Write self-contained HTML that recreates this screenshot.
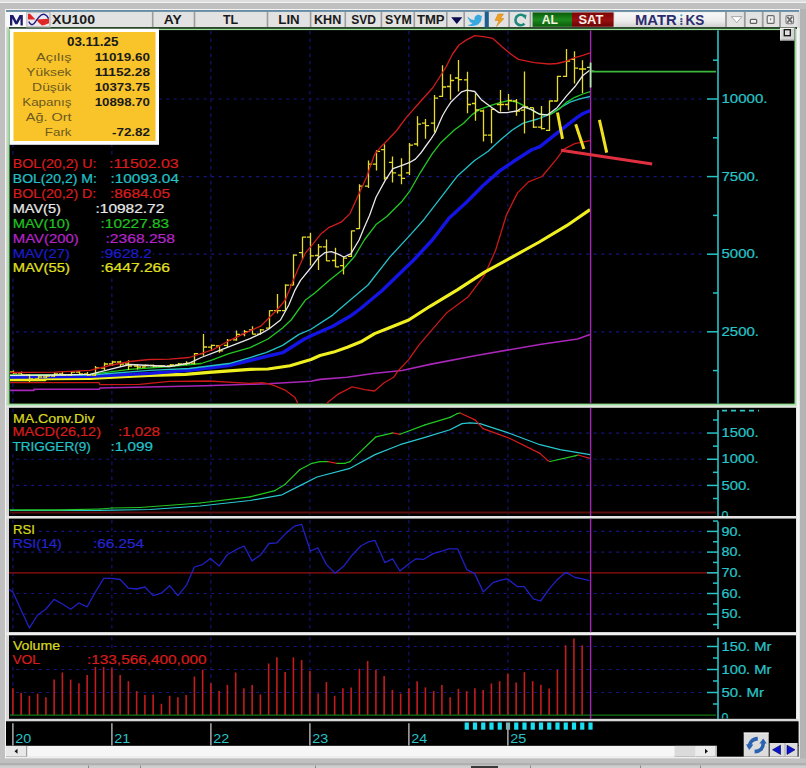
<!DOCTYPE html><html><head><meta charset="utf-8"><style>html,body{margin:0;padding:0;background:#c0c0c0;overflow:hidden}svg{display:block}</style></head><body><svg width="806" height="768" viewBox="0 0 806 768"><rect x="0" y="0" width="806" height="768" fill="#c0c0c0" /><rect x="0" y="0" width="806" height="1.5" fill="#dcdcdc" /><rect x="0" y="1.5" width="806" height="1.5" fill="#f2f2f2" /><rect x="5" y="9" width="795" height="750" fill="#d8d8d8" /><rect x="5" y="9" width="795" height="1" fill="#f4f4f4" /><rect x="5" y="9" width="1" height="750" fill="#f4f4f4" /><rect x="796.5" y="28" width="3" height="731" fill="#f4f4f4" /><rect x="800" y="9" width="6" height="759" fill="#b4b4b4" /><rect x="6" y="10.2" width="793" height="1.5" fill="#4a7898" /><rect x="6" y="12" width="791" height="15" fill="#e2e2e2" /><rect x="9" y="27.2" width="788" height="1.7" fill="#062406" /><rect x="6" y="12" width="20" height="15" fill="#f8f8f8" /><path d="M10 25.4 L10 15 L13.2 15 L16.4 21 L19.6 15 L22.8 15 L22.8 25.4 L20.5 25.4 L20.5 18.6 L17.5 24.2 L15.3 24.2 L12.3 18.6 L12.3 25.4 Z" fill="#1c1c6c"/><rect x="26.2" y="12" width="24.6" height="15.5" fill="#c4c4c4" /><rect x="27.5" y="13" width="21.5" height="13" fill="#ece8ec" /><path d="M28 13.8 L30 13.8 L35.5 19.5 L28 19.5 Z" fill="#e02828"/><path d="M36.5 19.6 L49 18.8 L49 23.2 L44.5 25 L42 25.4 L38.5 22.5 Z" fill="#e02828"/><path d="M28.8 21.5 C30 24.5 32 25.2 33.8 23.8 C35.5 22.5 37 19 39 17 C41 14.8 43 13.8 45 14.6 C46.5 15.3 47.8 17 48.6 18.6" fill="none" stroke="#1a1a88" stroke-width="1.4"/><rect x="151.89999999999998" y="12" width="1.6" height="15" fill="#9c9c9c" /><rect x="193.7" y="12" width="1.6" height="15" fill="#9c9c9c" /><rect x="266.7" y="12" width="1.6" height="15" fill="#9c9c9c" /><rect x="309.8" y="12" width="1.6" height="15" fill="#9c9c9c" /><rect x="344.5" y="12" width="1.6" height="15" fill="#9c9c9c" /><rect x="380.59999999999997" y="12" width="1.6" height="15" fill="#9c9c9c" /><rect x="413.5" y="12" width="1.6" height="15" fill="#9c9c9c" /><rect x="446.0" y="12" width="1.6" height="15" fill="#9c9c9c" /><rect x="463.4" y="12" width="1.6" height="15" fill="#9c9c9c" /><text x="52" y="24" font-family="Liberation Sans" font-size="12" fill="#1a1a1a" font-weight="bold" text-anchor="start" textLength="43" lengthAdjust="spacingAndGlyphs" >XU100</text><text x="163.7" y="24" font-family="Liberation Sans" font-size="12" fill="#1a1a1a" font-weight="bold" text-anchor="start" textLength="18" lengthAdjust="spacingAndGlyphs" >AY</text><text x="223" y="24" font-family="Liberation Sans" font-size="12" fill="#1a1a1a" font-weight="bold" text-anchor="start" textLength="15.2" lengthAdjust="spacingAndGlyphs" >TL</text><text x="278.3" y="24" font-family="Liberation Sans" font-size="12" fill="#1a1a1a" font-weight="bold" text-anchor="start" textLength="21.4" lengthAdjust="spacingAndGlyphs" >LIN</text><text x="314" y="24" font-family="Liberation Sans" font-size="12" fill="#1a1a1a" font-weight="bold" text-anchor="start" textLength="27.3" lengthAdjust="spacingAndGlyphs" >KHN</text><text x="351.3" y="24" font-family="Liberation Sans" font-size="12" fill="#1a1a1a" font-weight="bold" text-anchor="start" textLength="24.7" lengthAdjust="spacingAndGlyphs" >SVD</text><text x="385" y="24" font-family="Liberation Sans" font-size="12" fill="#1a1a1a" font-weight="bold" text-anchor="start" textLength="26.8" lengthAdjust="spacingAndGlyphs" >SYM</text><text x="416.9" y="24" font-family="Liberation Sans" font-size="12" fill="#1a1a1a" font-weight="bold" text-anchor="start" textLength="27.7" lengthAdjust="spacingAndGlyphs" >TMP</text><path d="M451.2 17.3 L462.3 17.3 L456.8 24 Z" fill="#0a0a50"/><path d="M467.5 16.5 C469.5 19 472 20 474.5 20 C474 17 476 14.5 479 14.8 C480 15 481 16 481 16 L482.5 15.5 L481.6 17 C482 22 478 26.5 471 26 C469.5 26 468.5 25.5 467.5 25 C470 25 471.5 24 472.5 23 C470 22.5 469 21 469 20.5 L470.5 20.5 C468.5 19.5 467.5 18.5 467.5 16.5 Z" fill="#3aa8e0"/><rect x="484.7" y="11.5" width="4.1" height="16" fill="#1e5e8e" /><path d="M498 14 L503.5 14 L500.5 18.5 L504 18.5 L496.5 26.5 L499 20.5 L495 20.5 Z" fill="#f0a020" stroke="#c07000" stroke-width="0.4"/><rect x="508.3" y="12" width="1.6" height="15" fill="#9c9c9c" /><path d="M524.5 16.5 A5.2 5.2 0 1 0 524.5 23.5" fill="none" stroke="#1e8a7a" stroke-width="2.6"/><path d="M521.5 14.5 L526.5 14.8 L525.8 19.5 Z" fill="#1e8a7a"/><rect x="529.6" y="12" width="1.6" height="15" fill="#9c9c9c" /><defs><linearGradient id="gAL" x1="0" y1="0" x2="0" y2="1"><stop offset="0" stop-color="#0a5a0a"/><stop offset="0.5" stop-color="#1e8a1e"/><stop offset="1" stop-color="#0a5a0a"/></linearGradient><linearGradient id="gSAT" x1="0" y1="0" x2="0" y2="1"><stop offset="0" stop-color="#7a0606"/><stop offset="0.5" stop-color="#9a1010"/><stop offset="1" stop-color="#6a0404"/></linearGradient><linearGradient id="gMK" x1="0" y1="0" x2="0" y2="1"><stop offset="0" stop-color="#f8f8f8"/><stop offset="0.6" stop-color="#ececec"/><stop offset="1" stop-color="#d0d0d0"/></linearGradient></defs><rect x="532.5" y="12.4" width="39.5" height="14.4" fill="url(#gAL)" /><text x="541.8" y="24.2" font-family="Liberation Sans" font-size="12.5" fill="#f4f4e0" font-weight="bold" text-anchor="start" textLength="16.2" lengthAdjust="spacingAndGlyphs" >AL</text><rect x="572" y="12.4" width="41.6" height="14.4" fill="url(#gSAT)" /><text x="578.5" y="24.2" font-family="Liberation Sans" font-size="12.5" fill="#f8f0e8" font-weight="bold" text-anchor="start" textLength="24.8" lengthAdjust="spacingAndGlyphs" >SAT</text><rect x="614.8" y="12.4" width="111" height="14.4" fill="url(#gMK)" /><text x="635" y="24.9" font-family="Liberation Sans" font-size="14.6" fill="#2b2d6e" font-weight="bold" text-anchor="start" textLength="41.6" lengthAdjust="spacingAndGlyphs" >MATR</text><text x="685.6" y="24.9" font-family="Liberation Sans" font-size="14.6" fill="#2b2d6e" font-weight="bold" text-anchor="start" textLength="18.8" lengthAdjust="spacingAndGlyphs" >KS</text><circle cx="681.4" cy="15.3" r="1.1" fill="#40a8c8"/><rect x="680.4" y="18.2" width="2" height="1.6" fill="#2b2d6e" /><rect x="680.4" y="20.6" width="2" height="1.6" fill="#2b2d6e" /><rect x="680.4" y="23.2" width="2" height="1.6" fill="#2b2d6e" /><rect x="726" y="12" width="71.5" height="15" fill="#e2e2e2" /><rect x="725.1" y="12" width="1.8" height="15" fill="#9a9a9a" /><rect x="743.9" y="12" width="1.8" height="15" fill="#9a9a9a" /><rect x="761.8000000000001" y="12" width="1.8" height="15" fill="#9a9a9a" /><rect x="779.1" y="12" width="1.8" height="15" fill="#9a9a9a" /><path d="M731.4 16.6 L741.9 16.6 L736.7 22.7 Z" fill="#ffffff" stroke="#a8a8a8" stroke-width="1"/><rect x="750.3" y="19.4" width="6.4" height="4" fill="#f0f0f0" rx="1" stroke="#606060" stroke-width="1.2"/><rect x="767.2" y="15.6" width="6.9" height="7.8" fill="#f0f0f0" rx="1" stroke="#6a6a6a" stroke-width="1.2"/><rect x="770.1" y="18.2" width="1.1" height="2.2" fill="#808080" /><rect x="786" y="15.6" width="7.5" height="8.2" fill="#f4f4f4" rx="1.5" stroke="#7a7a7a" stroke-width="1.1"/><path d="M787.3 16.8 L792.2 22.6 M792.2 16.8 L787.3 22.6" stroke="#6a6a6a" stroke-width="1.8"/><rect x="7.5" y="28.8" width="788.8" height="376.7" fill="#98e098" /><rect x="9.5" y="30.1" width="785" height="373.5" fill="#000000" /><rect x="6.5" y="405.5" width="790" height="2.3" fill="#dce8dc" /><rect x="9" y="407.8" width="787" height="108.2" fill="#000000" /><rect x="6.5" y="516" width="790" height="2.6" fill="#e4e4e4" /><rect x="9" y="518.6" width="787" height="113.7" fill="#000000" /><rect x="6.5" y="632.3" width="790" height="3" fill="#f0f0f0" /><rect x="9" y="635.3" width="787" height="83.6" fill="#000000" /><rect x="6.5" y="718.9" width="792" height="2.4" fill="#d8d8d8" /><rect x="6" y="721.3" width="792.6" height="24.6" fill="#000000" /><line x1="16.2" y1="99.0" x2="702" y2="99.0" stroke="#16167e" stroke-width="1.2" stroke-dasharray="3 4.5"/><line x1="16.2" y1="176.6" x2="702" y2="176.6" stroke="#16167e" stroke-width="1.2" stroke-dasharray="3 4.5"/><line x1="16.2" y1="254.2" x2="702" y2="254.2" stroke="#16167e" stroke-width="1.2" stroke-dasharray="3 4.5"/><line x1="16.2" y1="331.8" x2="702" y2="331.8" stroke="#16167e" stroke-width="1.2" stroke-dasharray="3 4.5"/><line x1="12.9" y1="31" x2="12.9" y2="403" stroke="#16167e" stroke-width="1.1" stroke-dasharray="3.5 4"/><line x1="111.9" y1="31" x2="111.9" y2="403" stroke="#16167e" stroke-width="1.1" stroke-dasharray="3.5 4"/><line x1="210.9" y1="31" x2="210.9" y2="403" stroke="#16167e" stroke-width="1.1" stroke-dasharray="3.5 4"/><line x1="309.9" y1="31" x2="309.9" y2="403" stroke="#16167e" stroke-width="1.1" stroke-dasharray="3.5 4"/><line x1="408.9" y1="31" x2="408.9" y2="403" stroke="#16167e" stroke-width="1.1" stroke-dasharray="3.5 4"/><line x1="507.9" y1="31" x2="507.9" y2="403" stroke="#16167e" stroke-width="1.1" stroke-dasharray="3.5 4"/><line x1="718" y1="30.3" x2="718" y2="403.6" stroke="#28c4c8" stroke-width="1.6" /><line x1="713" y1="60.19999999999999" x2="718" y2="60.19999999999999" stroke="#28c4c8" stroke-width="1.5" /><line x1="707" y1="99.0" x2="718" y2="99.0" stroke="#28c4c8" stroke-width="1.5" /><text x="721.5" y="103.2" font-family="Liberation Sans" font-size="12.4" fill="#28c4c8" stroke="#28c4c8" stroke-width="0.22" text-anchor="start" textLength="46" lengthAdjust="spacingAndGlyphs" >10000.</text><line x1="713" y1="137.8" x2="718" y2="137.8" stroke="#28c4c8" stroke-width="1.5" /><line x1="707" y1="176.6" x2="718" y2="176.6" stroke="#28c4c8" stroke-width="1.5" /><text x="721.5" y="180.79999999999998" font-family="Liberation Sans" font-size="12.4" fill="#28c4c8" stroke="#28c4c8" stroke-width="0.22" text-anchor="start" textLength="37.5" lengthAdjust="spacingAndGlyphs" >7500.</text><line x1="713" y1="215.4" x2="718" y2="215.4" stroke="#28c4c8" stroke-width="1.5" /><line x1="707" y1="254.2" x2="718" y2="254.2" stroke="#28c4c8" stroke-width="1.5" /><text x="721.5" y="258.4" font-family="Liberation Sans" font-size="12.4" fill="#28c4c8" stroke="#28c4c8" stroke-width="0.22" text-anchor="start" textLength="37.5" lengthAdjust="spacingAndGlyphs" >5000.</text><line x1="713" y1="293.0" x2="718" y2="293.0" stroke="#28c4c8" stroke-width="1.5" /><line x1="707" y1="331.8" x2="718" y2="331.8" stroke="#28c4c8" stroke-width="1.5" /><text x="721.5" y="336.0" font-family="Liberation Sans" font-size="12.4" fill="#28c4c8" stroke="#28c4c8" stroke-width="0.22" text-anchor="start" textLength="37.5" lengthAdjust="spacingAndGlyphs" >2500.</text><line x1="713" y1="370.6" x2="718" y2="370.6" stroke="#28c4c8" stroke-width="1.5" /><rect x="9.5" y="28.8" width="149.5" height="116" fill="#ffffff" /><rect x="13.5" y="32" width="142" height="109" fill="#f8c42a" /><text x="92.7" y="46.2" font-family="Liberation Sans" font-size="12" fill="#1a1a1a" font-weight="bold" text-anchor="middle" textLength="51.5" lengthAdjust="spacingAndGlyphs" >03.11.25</text><text x="71.5" y="60.6" font-family="Liberation Sans" font-size="11" fill="#6e5a20" text-anchor="end" textLength="35.5" lengthAdjust="spacingAndGlyphs" >Açılış</text><text x="150" y="60.6" font-family="Liberation Sans" font-size="11.7" fill="#1a1a1a" font-weight="bold" text-anchor="end" textLength="55.3" lengthAdjust="spacingAndGlyphs" >11019.60</text><text x="71.5" y="75.68" font-family="Liberation Sans" font-size="11" fill="#6e5a20" text-anchor="end" textLength="45.2" lengthAdjust="spacingAndGlyphs" >Yüksek</text><text x="150" y="75.68" font-family="Liberation Sans" font-size="11.7" fill="#1a1a1a" font-weight="bold" text-anchor="end" textLength="55.3" lengthAdjust="spacingAndGlyphs" >11152.28</text><text x="71.5" y="90.76" font-family="Liberation Sans" font-size="11" fill="#6e5a20" text-anchor="end" textLength="39.4" lengthAdjust="spacingAndGlyphs" >Düşük</text><text x="150" y="90.76" font-family="Liberation Sans" font-size="11.7" fill="#1a1a1a" font-weight="bold" text-anchor="end" textLength="55.3" lengthAdjust="spacingAndGlyphs" >10373.75</text><text x="71.5" y="105.84" font-family="Liberation Sans" font-size="11" fill="#6e5a20" text-anchor="end" textLength="49.3" lengthAdjust="spacingAndGlyphs" >Kapanış</text><text x="150" y="105.84" font-family="Liberation Sans" font-size="11.7" fill="#1a1a1a" font-weight="bold" text-anchor="end" textLength="55.3" lengthAdjust="spacingAndGlyphs" >10898.70</text><text x="71.5" y="120.92" font-family="Liberation Sans" font-size="11" fill="#6e5a20" text-anchor="end" textLength="45.7" lengthAdjust="spacingAndGlyphs" >Ağ. Ort</text><text x="71.5" y="136.0" font-family="Liberation Sans" font-size="11" fill="#6e5a20" text-anchor="end" textLength="26.700000000000003" lengthAdjust="spacingAndGlyphs" >Fark</text><text x="150" y="136.0" font-family="Liberation Sans" font-size="11.7" fill="#1a1a1a" font-weight="bold" text-anchor="end" textLength="38" lengthAdjust="spacingAndGlyphs" >-72.82</text><rect x="10" y="157.1" width="169.7" height="14.5" fill="#000" /><text x="12.8" y="168.1" font-family="Liberation Sans" font-size="12.4" fill="#d81c1c" stroke="#d81c1c" stroke-width="0.22" text-anchor="start" textLength="83.7" lengthAdjust="spacingAndGlyphs" >BOL(20,2) U:</text><text x="109" y="168.1" font-family="Liberation Sans" font-size="12.4" fill="#d81c1c" stroke="#d81c1c" stroke-width="0.22" text-anchor="start" textLength="69.7" lengthAdjust="spacingAndGlyphs" >:11502.03</text><rect x="10" y="172.0" width="170.0" height="14.5" fill="#000" /><text x="12.8" y="183.0" font-family="Liberation Sans" font-size="12.4" fill="#22c0c8" stroke="#22c0c8" stroke-width="0.22" text-anchor="start" textLength="84" lengthAdjust="spacingAndGlyphs" >BOL(20,2) M:</text><text x="110.4" y="183.0" font-family="Liberation Sans" font-size="12.4" fill="#22c0c8" stroke="#22c0c8" stroke-width="0.22" text-anchor="start" textLength="68.6" lengthAdjust="spacingAndGlyphs" >:10093.04</text><rect x="10" y="186.9" width="161" height="14.5" fill="#000" /><text x="12.8" y="197.9" font-family="Liberation Sans" font-size="12.4" fill="#d81c1c" stroke="#d81c1c" stroke-width="0.22" text-anchor="start" textLength="83.5" lengthAdjust="spacingAndGlyphs" >BOL(20,2) D:</text><text x="110" y="197.9" font-family="Liberation Sans" font-size="12.4" fill="#d81c1c" stroke="#d81c1c" stroke-width="0.22" text-anchor="start" textLength="60" lengthAdjust="spacingAndGlyphs" >:8684.05</text><rect x="10" y="201.8" width="155.3" height="14.5" fill="#000" /><text x="12.8" y="212.8" font-family="Liberation Sans" font-size="12.4" fill="#e8e8e8" stroke="#e8e8e8" stroke-width="0.22" text-anchor="start" textLength="48" lengthAdjust="spacingAndGlyphs" >MAV(5)</text><text x="95.5" y="212.8" font-family="Liberation Sans" font-size="12.4" fill="#e8e8e8" stroke="#e8e8e8" stroke-width="0.22" text-anchor="start" textLength="68.8" lengthAdjust="spacingAndGlyphs" >:10982.72</text><rect x="10" y="216.7" width="160.2" height="14.5" fill="#000" /><text x="12.8" y="227.7" font-family="Liberation Sans" font-size="12.4" fill="#20c020" stroke="#20c020" stroke-width="0.22" text-anchor="start" textLength="57" lengthAdjust="spacingAndGlyphs" >MAV(10)</text><text x="100.5" y="227.7" font-family="Liberation Sans" font-size="12.4" fill="#20c020" stroke="#20c020" stroke-width="0.22" text-anchor="start" textLength="68.7" lengthAdjust="spacingAndGlyphs" >:10227.83</text><rect x="10" y="231.6" width="166.0" height="14.5" fill="#000" /><text x="12.8" y="242.6" font-family="Liberation Sans" font-size="12.4" fill="#b424c8" stroke="#b424c8" stroke-width="0.22" text-anchor="start" textLength="66" lengthAdjust="spacingAndGlyphs" >MAV(200)</text><text x="105.5" y="242.6" font-family="Liberation Sans" font-size="12.4" fill="#b424c8" stroke="#b424c8" stroke-width="0.22" text-anchor="start" textLength="69.5" lengthAdjust="spacingAndGlyphs" >:2368.258</text><rect x="10" y="246.5" width="142.9" height="14.5" fill="#000" /><text x="12.8" y="257.5" font-family="Liberation Sans" font-size="12.4" fill="#1c1cc8" stroke="#1c1cc8" stroke-width="0.22" text-anchor="start" textLength="57" lengthAdjust="spacingAndGlyphs" >MAV(27)</text><text x="100.5" y="257.5" font-family="Liberation Sans" font-size="12.4" fill="#1c1cc8" stroke="#1c1cc8" stroke-width="0.22" text-anchor="start" textLength="51.4" lengthAdjust="spacingAndGlyphs" >:9628.2</text><rect x="10" y="261.4" width="161.0" height="14.5" fill="#000" /><text x="12.8" y="272.4" font-family="Liberation Sans" font-size="12.4" fill="#e0e020" stroke="#e0e020" stroke-width="0.22" text-anchor="start" textLength="57" lengthAdjust="spacingAndGlyphs" >MAV(55)</text><text x="100.5" y="272.4" font-family="Liberation Sans" font-size="12.4" fill="#e0e020" stroke="#e0e020" stroke-width="0.22" text-anchor="start" textLength="69.5" lengthAdjust="spacingAndGlyphs" >:6447.266</text><svg x="9.5" y="30.3" width="785" height="373.3" viewBox="9.5 30.3 785 373.3" overflow="hidden"><polyline points="10.0,390.4 34.0,390.4 34.0,389.3 99.0,389.3 100.0,388.0 159.5,386.7 205.1,385.7 250.0,384.3 268.0,383.7 311.0,381.2 320.0,379.4 347.0,377.3 375.0,373.2 402.0,370.5 430.0,364.4 477.6,355.2 541.3,344.3 577.6,339.0 590.0,334.5" fill="none" stroke="#a826b8" stroke-width="1.6" stroke-linejoin="round" /><polyline points="10.0,382.7 99.0,382.7 100.0,384.6 139.6,384.3 169.4,381.3 209.0,381.0 250.0,383.3 262.0,382.7 268.0,383.7 275.0,385.9 285.0,390.1 295.0,397.5 299.0,406.0" fill="none" stroke="#c81818" stroke-width="1.3" stroke-linejoin="round" /><polyline points="325.0,406.0 328.2,401.9 337.7,394.4 352.1,386.9 365.0,389.6 374.6,391.0 384.1,382.8 393.7,377.3 397.8,371.2 408.7,359.6 418.3,345.9 430.0,332.2 446.4,313.1 468.3,296.7 484.7,274.8 495.6,250.3 506.5,214.7 517.5,192.9 528.4,181.9 542.0,176.5 555.7,160.1 563.9,149.1 574.8,143.7 590.0,140.6" fill="none" stroke="#c81818" stroke-width="1.3" stroke-linejoin="round" /><polyline points="10.0,379.8 45.0,379.8 45.0,378.7 90.0,378.4 127.7,376.4 149.5,375.4 185.2,374.4 209.0,372.4 250.0,369.4 268.0,369.0 290.0,365.8 311.0,359.5 320.0,355.5 333.6,352.1 347.3,347.3 360.9,341.8 374.6,333.6 388.2,328.2 408.7,320.0 430.0,306.3 457.3,289.9 484.7,272.1 512.0,257.1 539.3,242.0 566.6,225.7 590.0,209.6" fill="none" stroke="#f0f020" stroke-width="3.1" stroke-linejoin="round" /><polyline points="10.0,377.0 90.0,376.4 149.5,373.4 189.2,370.4 229.0,365.5 250.0,360.5 266.0,356.5 282.6,352.7 304.5,339.0 310.6,336.0 332.7,326.2 350.0,316.3 360.0,309.0 381.9,290.7 413.7,260.0 432.3,240.0 449.2,218.0 466.2,202.5 483.1,185.5 500.0,170.6 516.5,159.5 531.3,150.0 540.0,146.7 558.2,132.1 576.5,117.8 583.0,113.5 590.2,110.6" fill="none" stroke="#1414e4" stroke-width="3.4" stroke-linejoin="round" /><polyline points="10.0,375.5 90.0,375.0 149.5,370.4 189.2,368.5 229.0,363.5 250.0,357.5 266.0,352.7 282.6,345.4 299.0,334.4 310.6,329.5 332.7,315.1 350.0,300.3 368.0,285.0 390.0,256.9 410.3,234.9 423.8,219.7 440.8,197.7 457.7,175.7 474.6,160.5 488.2,151.2 500.0,140.2 511.9,130.3 523.2,123.1 537.7,119.0 550.6,114.2 560.3,107.7 570.0,102.1 579.7,98.9 590.2,96.5" fill="none" stroke="#22c0c8" stroke-width="1.3" stroke-linejoin="round" /><polyline points="10.0,375.0 90.0,374.4 129.7,369.4 169.4,366.5 201.2,363.5 213.0,359.6 229.0,353.6 250.0,347.6 268.0,339.0 282.6,328.0 291.1,320.0 305.2,300.3 314.5,293.3 330.0,279.8 343.0,269.5 354.7,256.3 364.3,240.0 376.0,224.6 386.5,216.8 402.1,201.2 410.0,190.8 420.5,172.3 432.3,153.7 440.8,142.7 454.3,130.0 463.9,123.0 472.1,114.6 479.7,109.4 491.0,105.3 499.0,102.9 508.7,100.5 516.8,102.1 524.8,106.1 534.5,111.8 542.6,115.0 550.6,114.2 558.7,109.4 566.8,102.1 574.8,97.3 582.9,94.0 590.2,91.6" fill="none" stroke="#22c822" stroke-width="1.3" stroke-linejoin="round" /><path d="M13.5 370.5 L13.5 374 M9.9 372 L13.5 372 M13.5 373 L17.1 373" stroke="#e6dc28" stroke-width="1.3" fill="none"/><path d="M21.5 371.5 L21.5 376 M17.9 373 L21.5 373 M21.5 375 L25.1 375" stroke="#e6dc28" stroke-width="1.3" fill="none"/><path d="M29.5 374 L29.5 382 M25.9 375 L29.5 375 M29.5 379 L33.1 379" stroke="#e6dc28" stroke-width="1.3" fill="none"/><path d="M38.5 375 L38.5 381 M34.9 379 L38.5 379 M38.5 377 L42.1 377" stroke="#e6dc28" stroke-width="1.3" fill="none"/><path d="M46.5 375 L46.5 378 M42.9 377 L46.5 377 M46.5 376 L50.1 376" stroke="#e6dc28" stroke-width="1.3" fill="none"/><path d="M54.5 372.5 L54.5 377 M50.9 376 L54.5 376 M54.5 374 L58.1 374" stroke="#e6dc28" stroke-width="1.3" fill="none"/><path d="M62.5 372 L62.5 376 M58.9 374 L62.5 374 M62.5 375 L66.1 375" stroke="#e6dc28" stroke-width="1.3" fill="none"/><path d="M71.5 371 L71.5 376 M67.9 375 L71.5 375 M71.5 372 L75.1 372" stroke="#e6dc28" stroke-width="1.3" fill="none"/><path d="M79.5 371 L79.5 375 M75.9 372 L79.5 372 M79.5 374 L83.1 374" stroke="#e6dc28" stroke-width="1.3" fill="none"/><path d="M87.5 372 L87.5 376 M83.9 374 L87.5 374 M87.5 375 L91.1 375" stroke="#e6dc28" stroke-width="1.3" fill="none"/><path d="M95.5 366 L95.5 376 M91.9 375 L95.5 375 M95.5 368 L99.1 368" stroke="#e6dc28" stroke-width="1.3" fill="none"/><path d="M104.5 362.5 L104.5 370 M100.9 368 L104.5 368 M104.5 364 L108.1 364" stroke="#e6dc28" stroke-width="1.3" fill="none"/><path d="M112.5 360.8 L112.5 366 M108.9 364 L112.5 364 M112.5 362 L116.1 362" stroke="#e6dc28" stroke-width="1.3" fill="none"/><path d="M120.5 360.8 L120.5 366 M116.9 362 L120.5 362 M120.5 364 L124.1 364" stroke="#e6dc28" stroke-width="1.3" fill="none"/><path d="M128.5 360.2 L128.5 370 M124.9 364 L128.5 364 M128.5 366 L132.1 366" stroke="#e6dc28" stroke-width="1.3" fill="none"/><path d="M137.5 364.6 L137.5 369.4 M133.9 366 L137.5 366 M137.5 367 L141.1 367" stroke="#e6dc28" stroke-width="1.3" fill="none"/><path d="M145.5 364.6 L145.5 366.5 M141.9 367 L145.5 367 M145.5 365.5 L149.1 365.5" stroke="#e6dc28" stroke-width="1.3" fill="none"/><path d="M153.5 364.6 L153.5 367.3 M149.9 365.5 L153.5 365.5 M153.5 366 L157.1 366" stroke="#e6dc28" stroke-width="1.3" fill="none"/><path d="M161.5 365 L161.5 367 M157.9 366 L161.5 366 M161.5 366 L165.1 366" stroke="#e6dc28" stroke-width="1.3" fill="none"/><path d="M170.5 364 L170.5 366.5 M166.9 366 L170.5 366 M170.5 365 L174.1 365" stroke="#e6dc28" stroke-width="1.3" fill="none"/><path d="M178.5 363 L178.5 366 M174.9 365 L178.5 365 M178.5 364 L182.1 364" stroke="#e6dc28" stroke-width="1.3" fill="none"/><path d="M186.5 361.2 L186.5 365.3 M182.9 364 L186.5 364 M186.5 363.2 L190.1 363.2" stroke="#e6dc28" stroke-width="1.3" fill="none"/><path d="M194.5 353 L194.5 364.6 M190.9 363.2 L194.5 363.2 M194.5 353.7 L198.1 353.7" stroke="#e6dc28" stroke-width="1.3" fill="none"/><path d="M203.5 334 L203.5 355.7 M199.9 353.7 L203.5 353.7 M203.5 347 L207.1 347" stroke="#e6dc28" stroke-width="1.3" fill="none"/><path d="M211.5 344.5 L211.5 350.9 M207.9 347.2 L211.5 347.2 M211.5 345.4 L215.1 345.4" stroke="#e6dc28" stroke-width="1.3" fill="none"/><path d="M219.5 345.8 L219.5 352.7 M215.9 346 L219.5 346 M219.5 350.9 L223.1 350.9" stroke="#e6dc28" stroke-width="1.3" fill="none"/><path d="M227.5 339 L227.5 347.2 M223.9 345.4 L227.5 345.4 M227.5 340.3 L231.1 340.3" stroke="#e6dc28" stroke-width="1.3" fill="none"/><path d="M236.5 330.4 L236.5 340.8 M232.9 339.9 L236.5 339.9 M236.5 334.4 L240.1 334.4" stroke="#e6dc28" stroke-width="1.3" fill="none"/><path d="M244.5 329.9 L244.5 336.3 M240.9 334.4 L244.5 334.4 M244.5 331.7 L248.1 331.7" stroke="#e6dc28" stroke-width="1.3" fill="none"/><path d="M252.5 326.2 L252.5 334.4 M248.9 329.9 L252.5 329.9 M252.5 334.1 L256.1 334.1" stroke="#e6dc28" stroke-width="1.3" fill="none"/><path d="M260.5 329 L260.5 334.4 M256.9 334.1 L260.5 334.1 M260.5 329.9 L264.1 329.9" stroke="#e6dc28" stroke-width="1.3" fill="none"/><path d="M269.5 310.4 L269.5 329 M265.9 328.1 L269.5 328.1 M269.5 310.7 L273.1 310.7" stroke="#e6dc28" stroke-width="1.3" fill="none"/><path d="M277.5 294 L277.5 313.5 M273.9 310.7 L277.5 310.7 M277.5 310.7 L281.1 310.7" stroke="#e6dc28" stroke-width="1.3" fill="none"/><path d="M285.5 284.3 L285.5 310.7 M281.9 310.7 L285.5 310.7 M285.5 285.2 L289.1 285.2" stroke="#e6dc28" stroke-width="1.3" fill="none"/><path d="M293.5 254.2 L293.5 285.2 M289.9 285.2 L293.5 285.2 M293.5 255.1 L297.1 255.1" stroke="#e6dc28" stroke-width="1.3" fill="none"/><path d="M302.5 236.7 L302.5 259.4 M298.9 252.7 L302.5 252.7 M302.5 237.1 L306.1 237.1" stroke="#e6dc28" stroke-width="1.3" fill="none"/><path d="M310.5 232.8 L310.5 265.6 M306.9 237.1 L310.5 237.1 M310.5 255.9 L314.1 255.9" stroke="#e6dc28" stroke-width="1.3" fill="none"/><path d="M318.5 244.1 L318.5 269.9 M314.9 255.5 L318.5 255.5 M318.5 246.9 L322.1 246.9" stroke="#e6dc28" stroke-width="1.3" fill="none"/><path d="M326.5 239.5 L326.5 260.9 M322.9 246.9 L326.5 246.9 M326.5 260.9 L330.1 260.9" stroke="#e6dc28" stroke-width="1.3" fill="none"/><path d="M335.5 247.7 L335.5 267.2 M331.9 260.5 L335.5 260.5 M335.5 266.8 L339.1 266.8" stroke="#e6dc28" stroke-width="1.3" fill="none"/><path d="M343.5 256.6 L343.5 274.6 M339.9 265.6 L343.5 265.6 M343.5 258.2 L347.1 258.2" stroke="#e6dc28" stroke-width="1.3" fill="none"/><path d="M351.5 230.5 L351.5 257 M347.9 256.3 L351.5 256.3 M351.5 230.9 L355.1 230.9" stroke="#e6dc28" stroke-width="1.3" fill="none"/><path d="M359.5 184.3 L359.5 229 M355.9 228.6 L359.5 228.6 M359.5 186.1 L363.1 186.1" stroke="#e6dc28" stroke-width="1.3" fill="none"/><path d="M368.5 160.6 L368.5 187.9 M364.9 186.1 L368.5 186.1 M368.5 164.2 L372.1 164.2" stroke="#e6dc28" stroke-width="1.3" fill="none"/><path d="M376.5 150.2 L376.5 170.6 M372.9 164.2 L376.5 164.2 M376.5 151.4 L380.1 151.4" stroke="#e6dc28" stroke-width="1.3" fill="none"/><path d="M384.5 144.2 L384.5 179.7 M380.9 149.6 L384.5 149.6 M384.5 177.9 L388.1 177.9" stroke="#e6dc28" stroke-width="1.3" fill="none"/><path d="M392.5 156.4 L392.5 182.5 M388.9 162.4 L392.5 162.4 M392.5 172.8 L396.1 172.8" stroke="#e6dc28" stroke-width="1.3" fill="none"/><path d="M401.5 158.2 L401.5 184.3 M397.9 175.2 L401.5 175.2 M401.5 178.3 L405.1 178.3" stroke="#e6dc28" stroke-width="1.3" fill="none"/><path d="M409.5 142.9 L409.5 175 M405.9 172.8 L409.5 172.8 M409.5 145.1 L413.1 145.1" stroke="#e6dc28" stroke-width="1.3" fill="none"/><path d="M417.5 116.3 L417.5 146.2 M413.9 144 L417.5 144 M417.5 124.1 L421.1 124.1" stroke="#e6dc28" stroke-width="1.3" fill="none"/><path d="M425.5 119 L425.5 138.8 M421.9 123.1 L425.5 123.1 M425.5 125.7 L429.1 125.7" stroke="#e6dc28" stroke-width="1.3" fill="none"/><path d="M434.5 95 L434.5 132.5 M430.9 123.1 L434.5 123.1 M434.5 98.1 L438.1 98.1" stroke="#e6dc28" stroke-width="1.3" fill="none"/><path d="M442.5 65.2 L442.5 97 M438.9 96.4 L442.5 96.4 M442.5 87 L446.1 87" stroke="#e6dc28" stroke-width="1.3" fill="none"/><path d="M450.5 74.2 L450.5 99.7 M446.9 86.5 L450.5 86.5 M450.5 80.5 L454.1 80.5" stroke="#e6dc28" stroke-width="1.3" fill="none"/><path d="M458.5 60 L458.5 91.6 M454.9 78 L458.5 78 M458.5 79.6 L462.1 79.6" stroke="#e6dc28" stroke-width="1.3" fill="none"/><path d="M467.5 71.8 L467.5 113.2 M463.9 79.8 L467.5 79.8 M467.5 104.5 L471.1 104.5" stroke="#e6dc28" stroke-width="1.3" fill="none"/><path d="M475.5 93.5 L475.5 120.8 M471.9 103.5 L475.5 103.5 M475.5 110 L479.1 110" stroke="#e6dc28" stroke-width="1.3" fill="none"/><path d="M483.5 109.4 L483.5 141.6 M479.9 111 L483.5 111 M483.5 135.2 L487.1 135.2" stroke="#e6dc28" stroke-width="1.3" fill="none"/><path d="M491.5 108.5 L491.5 143.2 M487.9 135.2 L491.5 135.2 M491.5 109.4 L495.1 109.4" stroke="#e6dc28" stroke-width="1.3" fill="none"/><path d="M500.5 90 L500.5 111.8 M496.9 104.5 L500.5 104.5 M500.5 104.5 L504.1 104.5" stroke="#e6dc28" stroke-width="1.3" fill="none"/><path d="M508.5 94 L508.5 110.2 M504.9 104.5 L508.5 104.5 M508.5 100.5 L512.1 100.5" stroke="#e6dc28" stroke-width="1.3" fill="none"/><path d="M516.5 98.9 L516.5 115.8 M512.9 101 L516.5 101 M516.5 111 L520.1 111" stroke="#e6dc28" stroke-width="1.3" fill="none"/><path d="M524.5 71.5 L524.5 133.5 M520.9 110.2 L524.5 110.2 M524.5 106.9 L528.1 106.9" stroke="#e6dc28" stroke-width="1.3" fill="none"/><path d="M533.5 107.7 L533.5 127.9 M529.9 107.7 L533.5 107.7 M533.5 127.1 L537.1 127.1" stroke="#e6dc28" stroke-width="1.3" fill="none"/><path d="M541.5 106.1 L541.5 129.5 M537.9 127.1 L541.5 127.1 M541.5 128.7 L545.1 128.7" stroke="#e6dc28" stroke-width="1.3" fill="none"/><path d="M549.5 100.5 L549.5 131.1 M545.9 130.3 L549.5 130.3 M549.5 101 L553.1 101" stroke="#e6dc28" stroke-width="1.3" fill="none"/><path d="M557.5 75.8 L557.5 101.3 M553.9 101 L557.5 101 M557.5 76.3 L561.1 76.3" stroke="#e6dc28" stroke-width="1.3" fill="none"/><path d="M566.5 48.9 L566.5 77.1 M562.9 76.3 L566.5 76.3 M566.5 61 L570.1 61" stroke="#e6dc28" stroke-width="1.3" fill="none"/><path d="M574.5 51.3 L574.5 83.5 M570.9 59.4 L574.5 59.4 M574.5 68.2 L578.1 68.2" stroke="#e6dc28" stroke-width="1.3" fill="none"/><path d="M582.5 60.2 L582.5 93.2 M578.9 69 L582.5 69 M582.5 69 L586.1 69" stroke="#e6dc28" stroke-width="1.3" fill="none"/><path d="M590.5 63.2 L590.5 87.4 M586.9 67.35 L590.5 67.35 M590.5 71.1 L594.1 71.1" stroke="#b0e8a0" stroke-width="1.3" fill="none"/><polyline points="10.0,375.3 60.0,375.0 90.0,374.4 109.8,369.4 129.7,364.5 149.5,365.5 169.4,366.5 189.2,363.1 201.2,357.5 219.0,350.6 250.0,338.7 260.7,333.6 268.9,329.0 280.5,320.0 288.8,305.0 294.6,290.9 300.5,280.4 311.0,267.5 318.0,258.1 325.0,252.6 331.3,251.6 337.5,253.9 343.8,257.0 350.8,253.9 359.1,240.0 364.0,228.0 369.5,215.5 376.0,197.3 385.2,180.4 393.0,168.6 402.1,165.4 409.2,162.7 415.4,159.1 420.6,153.3 425.8,146.0 431.0,138.8 435.2,132.5 438.3,125.2 442.5,115.8 446.7,108.5 450.8,102.3 455.0,98.1 461.7,91.8 466.9,90.2 474.7,91.5 481.3,99.7 491.0,106.9 499.0,112.6 507.1,112.6 516.8,111.0 523.2,106.9 531.3,109.4 539.4,114.2 547.4,115.0 557.1,107.7 566.8,95.6 574.8,86.8 582.9,75.5 589.4,70.6" fill="none" stroke="#e8e8e8" stroke-width="1.3" stroke-linejoin="round" /><polyline points="10.0,372.5 55.0,372.2 90.0,370.4 109.8,365.5 129.7,361.5 149.5,359.5 169.4,359.1 189.2,357.5 201.2,353.6 213.0,349.6 229.0,340.7 250.0,330.8 260.7,326.2 268.9,318.0 276.2,310.7 285.2,300.3 292.3,282.7 298.1,268.7 305.2,253.4 311.0,246.4 320.8,234.1 329.2,227.3 341.1,222.2 350.0,213.6 359.8,192.0 366.9,176.5 369.5,168.6 374.7,154.3 380.0,147.8 387.8,140.0 397.0,130.0 406.4,117.4 420.0,102.0 433.0,87.5 446.0,67.0 452.6,54.0 459.0,45.0 465.6,40.4 474.7,35.6 485.1,36.9 492.9,38.4 502.3,47.0 511.0,54.3 518.4,59.4 534.5,62.6 549.0,64.0 557.0,63.5 565.2,61.5 574.8,57.7 582.9,55.3 590.2,52.9" fill="none" stroke="#d01c1c" stroke-width="1.3" stroke-linejoin="round" /><line x1="590.5" y1="71.6" x2="716" y2="71.6" stroke="#3cb83c" stroke-width="1.6" /><line x1="590.6" y1="30.3" x2="590.6" y2="403.6" stroke="#a028b0" stroke-width="1.4" /><line x1="590.6" y1="62.6" x2="590.6" y2="87.6" stroke="#b0eaa8" stroke-width="1.6" /><line x1="561" y1="150.2" x2="652.2" y2="164" stroke="#e03040" stroke-width="3" /><line x1="557.5" y1="112.5" x2="562.5" y2="138.9" stroke="#f0e020" stroke-width="3" /><line x1="575.7" y1="124.3" x2="583.9" y2="149" stroke="#f0e020" stroke-width="3" /><line x1="599.4" y1="119.8" x2="606.7" y2="152.6" stroke="#f0e020" stroke-width="3" /></svg><rect x="780.2" y="27.8" width="15" height="12.9" fill="#d4d4d4" /><rect x="780.2" y="27.8" width="15" height="1" fill="#f8f8f8" /><rect x="780.2" y="27.8" width="1" height="12.9" fill="#f8f8f8" /><rect x="780.2" y="39.7" width="15" height="1" fill="#808080" /><rect x="794.2" y="27.8" width="1" height="12.9" fill="#808080" /><rect x="784.3" y="29.7" width="6" height="6" fill="#e0e0e0" stroke="#101010" stroke-width="1.3"/><line x1="16.2" y1="433.06000000000006" x2="702" y2="433.06000000000006" stroke="#16167e" stroke-width="1.2" stroke-dasharray="3 4.5"/><line x1="16.2" y1="459.24" x2="702" y2="459.24" stroke="#16167e" stroke-width="1.2" stroke-dasharray="3 4.5"/><line x1="16.2" y1="485.42" x2="702" y2="485.42" stroke="#16167e" stroke-width="1.2" stroke-dasharray="3 4.5"/><line x1="12.9" y1="409" x2="12.9" y2="515" stroke="#16167e" stroke-width="1.1" stroke-dasharray="3.5 4"/><line x1="111.9" y1="409" x2="111.9" y2="515" stroke="#16167e" stroke-width="1.1" stroke-dasharray="3.5 4"/><line x1="210.9" y1="409" x2="210.9" y2="515" stroke="#16167e" stroke-width="1.1" stroke-dasharray="3.5 4"/><line x1="309.9" y1="409" x2="309.9" y2="515" stroke="#16167e" stroke-width="1.1" stroke-dasharray="3.5 4"/><line x1="408.9" y1="409" x2="408.9" y2="515" stroke="#16167e" stroke-width="1.1" stroke-dasharray="3.5 4"/><line x1="507.9" y1="409" x2="507.9" y2="515" stroke="#16167e" stroke-width="1.1" stroke-dasharray="3.5 4"/><line x1="718" y1="410" x2="718" y2="516" stroke="#28c4c8" stroke-width="1.6" /><line x1="713" y1="419.97" x2="718" y2="419.97" stroke="#28c4c8" stroke-width="1.5" /><line x1="707" y1="433.06000000000006" x2="718" y2="433.06000000000006" stroke="#28c4c8" stroke-width="1.5" /><text x="721.5" y="437.26000000000005" font-family="Liberation Sans" font-size="12.4" fill="#28c4c8" stroke="#28c4c8" stroke-width="0.22" text-anchor="start" textLength="37" lengthAdjust="spacingAndGlyphs" >1500.</text><line x1="713" y1="446.15000000000003" x2="718" y2="446.15000000000003" stroke="#28c4c8" stroke-width="1.5" /><line x1="707" y1="459.24" x2="718" y2="459.24" stroke="#28c4c8" stroke-width="1.5" /><text x="721.5" y="463.44" font-family="Liberation Sans" font-size="12.4" fill="#28c4c8" stroke="#28c4c8" stroke-width="0.22" text-anchor="start" textLength="37" lengthAdjust="spacingAndGlyphs" >1000.</text><line x1="713" y1="472.33000000000004" x2="718" y2="472.33000000000004" stroke="#28c4c8" stroke-width="1.5" /><line x1="707" y1="485.42" x2="718" y2="485.42" stroke="#28c4c8" stroke-width="1.5" /><text x="721.5" y="489.62" font-family="Liberation Sans" font-size="12.4" fill="#28c4c8" stroke="#28c4c8" stroke-width="0.22" text-anchor="start" textLength="29" lengthAdjust="spacingAndGlyphs" >500.</text><line x1="713" y1="498.51000000000005" x2="718" y2="498.51000000000005" stroke="#28c4c8" stroke-width="1.5" /><line x1="722" y1="410.6" x2="759" y2="410.6" stroke="#28c4c8" stroke-width="1.6" stroke-dasharray="5 4"/><text x="721.5" y="520" font-family="Liberation Sans" font-size="12.4" fill="#28c4c8" stroke="#28c4c8" stroke-width="0.22" text-anchor="start" clip-path="url(#cpM)">0</text><defs><clipPath id="cpM"><rect x="700" y="408" width="90" height="108"/></clipPath></defs><line x1="10" y1="512.4" x2="716" y2="512.4" stroke="#5a0c0c" stroke-width="2" /><svg x="9" y="407.8" width="787" height="108.2" viewBox="9 407.8 787 108.2" overflow="hidden"><polyline points="10.0,510.5 100.0,510.3 150.0,509.5 200.0,506.0 250.0,500.5 282.0,494.8 300.0,485.6 317.0,477.0 350.0,468.3 375.0,454.6 400.0,444.7 425.0,437.3 450.0,429.8 462.0,423.6 470.0,422.9 480.0,423.6 510.0,433.5 540.0,444.7 560.0,449.7 590.0,454.6" fill="none" stroke="#28c8d0" stroke-width="1.2" stroke-linejoin="round" /><line x1="10" y1="509.8" x2="60" y2="509.8" stroke="#22c822" stroke-width="1.2" stroke-linecap="round"/><line x1="60" y1="509.8" x2="100" y2="509" stroke="#22c822" stroke-width="1.2" stroke-linecap="round"/><line x1="100" y1="509" x2="112" y2="508" stroke="#22c822" stroke-width="1.2" stroke-linecap="round"/><line x1="112" y1="508" x2="140" y2="507.5" stroke="#22c822" stroke-width="1.2" stroke-linecap="round"/><line x1="140" y1="507.5" x2="200" y2="503" stroke="#22c822" stroke-width="1.2" stroke-linecap="round"/><line x1="200" y1="503" x2="250" y2="496.8" stroke="#22c822" stroke-width="1.2" stroke-linecap="round"/><line x1="250" y1="496.8" x2="275" y2="490.6" stroke="#22c822" stroke-width="1.2" stroke-linecap="round"/><line x1="275" y1="490.6" x2="285" y2="484.4" stroke="#22c822" stroke-width="1.2" stroke-linecap="round"/><line x1="285" y1="484.4" x2="300" y2="469.5" stroke="#22c822" stroke-width="1.2" stroke-linecap="round"/><line x1="300" y1="469.5" x2="312" y2="463.3" stroke="#22c822" stroke-width="1.2" stroke-linecap="round"/><line x1="312" y1="463.3" x2="320" y2="461.6" stroke="#22c822" stroke-width="1.2" stroke-linecap="round"/><line x1="320" y1="461.6" x2="328" y2="461.6" stroke="#22c822" stroke-width="1.2" stroke-linecap="round"/><line x1="328" y1="461.6" x2="337" y2="463.3" stroke="#d81c1c" stroke-width="1.2" stroke-linecap="round"/><line x1="337" y1="463.3" x2="345" y2="463.3" stroke="#22c822" stroke-width="1.2" stroke-linecap="round"/><line x1="345" y1="463.3" x2="350" y2="461.6" stroke="#22c822" stroke-width="1.2" stroke-linecap="round"/><line x1="350" y1="461.6" x2="376" y2="436.8" stroke="#22c822" stroke-width="1.2" stroke-linecap="round"/><line x1="376" y1="436.8" x2="393" y2="432.8" stroke="#22c822" stroke-width="1.2" stroke-linecap="round"/><line x1="393" y1="432.8" x2="400" y2="434.3" stroke="#d81c1c" stroke-width="1.2" stroke-linecap="round"/><line x1="400" y1="434.3" x2="425" y2="424.9" stroke="#22c822" stroke-width="1.2" stroke-linecap="round"/><line x1="425" y1="424.9" x2="450" y2="417.4" stroke="#22c822" stroke-width="1.2" stroke-linecap="round"/><line x1="450" y1="417.4" x2="457" y2="413.7" stroke="#22c822" stroke-width="1.2" stroke-linecap="round"/><line x1="457" y1="413.7" x2="460" y2="413" stroke="#22c822" stroke-width="1.2" stroke-linecap="round"/><line x1="460" y1="413" x2="475" y2="419.9" stroke="#d81c1c" stroke-width="1.2" stroke-linecap="round"/><line x1="475" y1="419.9" x2="483" y2="428.6" stroke="#d81c1c" stroke-width="1.2" stroke-linecap="round"/><line x1="483" y1="428.6" x2="510" y2="438.5" stroke="#d81c1c" stroke-width="1.2" stroke-linecap="round"/><line x1="510" y1="438.5" x2="540" y2="453.4" stroke="#d81c1c" stroke-width="1.2" stroke-linecap="round"/><line x1="540" y1="453.4" x2="548" y2="460.8" stroke="#d81c1c" stroke-width="1.2" stroke-linecap="round"/><line x1="548" y1="460.8" x2="550" y2="461.5" stroke="#d81c1c" stroke-width="1.2" stroke-linecap="round"/><line x1="550" y1="461.5" x2="575" y2="455.9" stroke="#22c822" stroke-width="1.2" stroke-linecap="round"/><line x1="575" y1="455.9" x2="578" y2="455" stroke="#22c822" stroke-width="1.2" stroke-linecap="round"/><line x1="578" y1="455" x2="590" y2="458.3" stroke="#d81c1c" stroke-width="1.2" stroke-linecap="round"/><line x1="590.6" y1="407.8" x2="590.6" y2="516" stroke="#a028b0" stroke-width="1.4" /></svg><rect x="10" y="412" width="85" height="14" fill="#000" /><rect x="10" y="426" width="151" height="14.5" fill="#000" /><rect x="10" y="440.5" width="144" height="14" fill="#000" /><text x="12.9" y="422.8" font-family="Liberation Sans" font-size="12.4" fill="#d8d820" stroke="#d8d820" stroke-width="0.22" text-anchor="start" textLength="81.6" lengthAdjust="spacingAndGlyphs" >MA.Conv.Div</text><text x="12.4" y="435.7" font-family="Liberation Sans" font-size="12.4" fill="#d81c1c" stroke="#d81c1c" stroke-width="0.22" text-anchor="start" textLength="88.6" lengthAdjust="spacingAndGlyphs" >MACD(26,12)</text><text x="118" y="435.7" font-family="Liberation Sans" font-size="12.4" fill="#d81c1c" stroke="#d81c1c" stroke-width="0.22" text-anchor="start" textLength="42" lengthAdjust="spacingAndGlyphs" >:1,028</text><text x="12.4" y="451.4" font-family="Liberation Sans" font-size="12.4" fill="#22c0c8" stroke="#22c0c8" stroke-width="0.22" text-anchor="start" textLength="78.4" lengthAdjust="spacingAndGlyphs" >TRIGGER(9)</text><text x="110.4" y="451.4" font-family="Liberation Sans" font-size="12.4" fill="#22c0c8" stroke="#22c0c8" stroke-width="0.22" text-anchor="start" textLength="42.6" lengthAdjust="spacingAndGlyphs" >:1,099</text><line x1="16.2" y1="531.4" x2="702" y2="531.4" stroke="#16167e" stroke-width="1.2" stroke-dasharray="3 4.5"/><line x1="16.2" y1="552.0999999999999" x2="702" y2="552.0999999999999" stroke="#16167e" stroke-width="1.2" stroke-dasharray="3 4.5"/><line x1="16.2" y1="593.5" x2="702" y2="593.5" stroke="#16167e" stroke-width="1.2" stroke-dasharray="3 4.5"/><line x1="16.2" y1="614.1999999999999" x2="702" y2="614.1999999999999" stroke="#16167e" stroke-width="1.2" stroke-dasharray="3 4.5"/><line x1="12.9" y1="520" x2="12.9" y2="632" stroke="#16167e" stroke-width="1.1" stroke-dasharray="3.5 4"/><line x1="111.9" y1="520" x2="111.9" y2="632" stroke="#16167e" stroke-width="1.1" stroke-dasharray="3.5 4"/><line x1="210.9" y1="520" x2="210.9" y2="632" stroke="#16167e" stroke-width="1.1" stroke-dasharray="3.5 4"/><line x1="309.9" y1="520" x2="309.9" y2="632" stroke="#16167e" stroke-width="1.1" stroke-dasharray="3.5 4"/><line x1="408.9" y1="520" x2="408.9" y2="632" stroke="#16167e" stroke-width="1.1" stroke-dasharray="3.5 4"/><line x1="507.9" y1="520" x2="507.9" y2="632" stroke="#16167e" stroke-width="1.1" stroke-dasharray="3.5 4"/><line x1="9" y1="572.8" x2="718" y2="572.8" stroke="#961010" stroke-width="1.2" /><line x1="718" y1="521.5" x2="718" y2="629" stroke="#28c4c8" stroke-width="1.6" /><line x1="713" y1="521.05" x2="718" y2="521.05" stroke="#28c4c8" stroke-width="1.5" /><line x1="707" y1="531.4" x2="718" y2="531.4" stroke="#28c4c8" stroke-width="1.5" /><text x="721.5" y="535.6" font-family="Liberation Sans" font-size="12.4" fill="#28c4c8" stroke="#28c4c8" stroke-width="0.22" text-anchor="start" textLength="20" lengthAdjust="spacingAndGlyphs" >90.</text><line x1="713" y1="541.75" x2="718" y2="541.75" stroke="#28c4c8" stroke-width="1.5" /><line x1="707" y1="552.0999999999999" x2="718" y2="552.0999999999999" stroke="#28c4c8" stroke-width="1.5" /><text x="721.5" y="556.3" font-family="Liberation Sans" font-size="12.4" fill="#28c4c8" stroke="#28c4c8" stroke-width="0.22" text-anchor="start" textLength="20" lengthAdjust="spacingAndGlyphs" >80.</text><line x1="713" y1="562.4499999999999" x2="718" y2="562.4499999999999" stroke="#28c4c8" stroke-width="1.5" /><line x1="707" y1="572.8" x2="718" y2="572.8" stroke="#28c4c8" stroke-width="1.5" /><text x="721.5" y="577.0" font-family="Liberation Sans" font-size="12.4" fill="#28c4c8" stroke="#28c4c8" stroke-width="0.22" text-anchor="start" textLength="20" lengthAdjust="spacingAndGlyphs" >70.</text><line x1="713" y1="583.15" x2="718" y2="583.15" stroke="#28c4c8" stroke-width="1.5" /><line x1="707" y1="593.5" x2="718" y2="593.5" stroke="#28c4c8" stroke-width="1.5" /><text x="721.5" y="597.7" font-family="Liberation Sans" font-size="12.4" fill="#28c4c8" stroke="#28c4c8" stroke-width="0.22" text-anchor="start" textLength="20" lengthAdjust="spacingAndGlyphs" >60.</text><line x1="713" y1="603.8499999999999" x2="718" y2="603.8499999999999" stroke="#28c4c8" stroke-width="1.5" /><line x1="707" y1="614.1999999999999" x2="718" y2="614.1999999999999" stroke="#28c4c8" stroke-width="1.5" /><text x="721.5" y="618.4" font-family="Liberation Sans" font-size="12.4" fill="#28c4c8" stroke="#28c4c8" stroke-width="0.22" text-anchor="start" textLength="20" lengthAdjust="spacingAndGlyphs" >50.</text><line x1="713" y1="624.55" x2="718" y2="624.55" stroke="#28c4c8" stroke-width="1.5" /><polyline points="9.0,589.5 12.9,591.9 21.1,610.0 29.4,627.9 37.6,615.0 45.9,609.0 54.1,599.4 62.4,604.0 70.7,609.3 78.9,603.0 87.2,606.8 95.4,592.0 103.7,578.3 111.9,578.3 120.2,579.5 128.4,588.2 136.7,589.0 144.9,587.0 153.2,595.6 161.4,593.2 169.7,585.7 177.9,595.6 186.2,585.7 194.4,567.0 202.4,564.6 210.4,558.4 219.3,565.9 227.3,554.7 236.0,549.7 244.1,546.0 252.0,560.9 260.8,554.7 269.0,543.5 276.9,542.8 285.6,533.6 294.3,526.2 301.7,524.4 310.4,551.0 317.8,547.8 326.5,564.6 335.2,573.3 343.9,565.9 352.6,554.7 360.8,546.0 368.7,541.8 374.9,540.3 384.8,562.6 392.6,558.8 399.9,571.0 409.5,563.2 416.0,558.8 423.9,559.3 433.0,553.6 442.1,551.0 448.6,548.9 457.7,548.9 466.9,569.7 474.7,573.6 483.3,591.9 492.9,582.7 500.7,580.1 507.2,578.8 517.7,586.7 524.2,586.7 533.3,598.9 540.6,601.0 548.9,589.3 556.8,580.1 565.9,572.3 575.0,577.5 582.8,578.8 589.3,580.7" fill="none" stroke="#2020c4" stroke-width="1.3" stroke-linejoin="round" /><line x1="590.6" y1="518.6" x2="590.6" y2="632.3" stroke="#a028b0" stroke-width="1.4" /><rect x="10" y="523" width="26" height="14" fill="#000" /><rect x="10" y="537" width="135" height="14" fill="#000" /><text x="12.9" y="534" font-family="Liberation Sans" font-size="12.4" fill="#d8d820" stroke="#d8d820" stroke-width="0.22" text-anchor="start" textLength="22" lengthAdjust="spacingAndGlyphs" >RSI</text><text x="12.4" y="547.6" font-family="Liberation Sans" font-size="12.4" fill="#2424d0" stroke="#2424d0" stroke-width="0.22" text-anchor="start" textLength="49.5" lengthAdjust="spacingAndGlyphs" >RSI(14)</text><text x="93" y="547.6" font-family="Liberation Sans" font-size="12.4" fill="#2424d0" stroke="#2424d0" stroke-width="0.22" text-anchor="start" textLength="51" lengthAdjust="spacingAndGlyphs" >:66.254</text><line x1="16.2" y1="646.5" x2="702" y2="646.5" stroke="#16167e" stroke-width="1.2" stroke-dasharray="3 4.5"/><line x1="16.2" y1="669.5" x2="702" y2="669.5" stroke="#16167e" stroke-width="1.2" stroke-dasharray="3 4.5"/><line x1="16.2" y1="692.5" x2="702" y2="692.5" stroke="#16167e" stroke-width="1.2" stroke-dasharray="3 4.5"/><line x1="12.9" y1="637" x2="12.9" y2="715" stroke="#16167e" stroke-width="1.1" stroke-dasharray="3.5 4"/><line x1="111.9" y1="637" x2="111.9" y2="715" stroke="#16167e" stroke-width="1.1" stroke-dasharray="3.5 4"/><line x1="210.9" y1="637" x2="210.9" y2="715" stroke="#16167e" stroke-width="1.1" stroke-dasharray="3.5 4"/><line x1="309.9" y1="637" x2="309.9" y2="715" stroke="#16167e" stroke-width="1.1" stroke-dasharray="3.5 4"/><line x1="408.9" y1="637" x2="408.9" y2="715" stroke="#16167e" stroke-width="1.1" stroke-dasharray="3.5 4"/><line x1="507.9" y1="637" x2="507.9" y2="715" stroke="#16167e" stroke-width="1.1" stroke-dasharray="3.5 4"/><line x1="12.9" y1="688.3" x2="12.9" y2="715" stroke="#c41c1c" stroke-width="1.6" /><line x1="21.15" y1="693" x2="21.15" y2="715" stroke="#c41c1c" stroke-width="1.6" /><line x1="29.4" y1="695.8" x2="29.4" y2="715" stroke="#c41c1c" stroke-width="1.6" /><line x1="37.65" y1="693.6" x2="37.65" y2="715" stroke="#c41c1c" stroke-width="1.6" /><line x1="45.9" y1="697.3" x2="45.9" y2="715" stroke="#c41c1c" stroke-width="1.6" /><line x1="54.15" y1="679.6" x2="54.15" y2="715" stroke="#c41c1c" stroke-width="1.6" /><line x1="62.4" y1="672.5" x2="62.4" y2="715" stroke="#c41c1c" stroke-width="1.6" /><line x1="70.65" y1="679.6" x2="70.65" y2="715" stroke="#c41c1c" stroke-width="1.6" /><line x1="78.9" y1="683.3" x2="78.9" y2="715" stroke="#c41c1c" stroke-width="1.6" /><line x1="87.15" y1="675" x2="87.15" y2="715" stroke="#c41c1c" stroke-width="1.6" /><line x1="95.4" y1="666.6" x2="95.4" y2="715" stroke="#c41c1c" stroke-width="1.6" /><line x1="103.65" y1="666.6" x2="103.65" y2="715" stroke="#c41c1c" stroke-width="1.6" /><line x1="111.9" y1="667.8" x2="111.9" y2="715" stroke="#c41c1c" stroke-width="1.6" /><line x1="120.15" y1="675" x2="120.15" y2="715" stroke="#c41c1c" stroke-width="1.6" /><line x1="128.4" y1="681.2" x2="128.4" y2="715" stroke="#c41c1c" stroke-width="1.6" /><line x1="136.65" y1="691.1" x2="136.65" y2="715" stroke="#c41c1c" stroke-width="1.6" /><line x1="144.9" y1="695.1" x2="144.9" y2="715" stroke="#c41c1c" stroke-width="1.6" /><line x1="153.15" y1="694.5" x2="153.15" y2="715" stroke="#c41c1c" stroke-width="1.6" /><line x1="161.4" y1="703.8" x2="161.4" y2="715" stroke="#c41c1c" stroke-width="1.6" /><line x1="169.65" y1="695.8" x2="169.65" y2="715" stroke="#c41c1c" stroke-width="1.6" /><line x1="177.9" y1="697.3" x2="177.9" y2="715" stroke="#c41c1c" stroke-width="1.6" /><line x1="186.15" y1="695.1" x2="186.15" y2="715" stroke="#c41c1c" stroke-width="1.6" /><line x1="194.4" y1="676.5" x2="194.4" y2="715" stroke="#c41c1c" stroke-width="1.6" /><line x1="202.65" y1="669.7" x2="202.65" y2="715" stroke="#c41c1c" stroke-width="1.6" /><line x1="210.9" y1="683.3" x2="210.9" y2="715" stroke="#c41c1c" stroke-width="1.6" /><line x1="219.15" y1="691.1" x2="219.15" y2="715" stroke="#c41c1c" stroke-width="1.6" /><line x1="227.4" y1="684.9" x2="227.4" y2="715" stroke="#c41c1c" stroke-width="1.6" /><line x1="235.65" y1="672.5" x2="235.65" y2="715" stroke="#c41c1c" stroke-width="1.6" /><line x1="243.9" y1="688.3" x2="243.9" y2="715" stroke="#c41c1c" stroke-width="1.6" /><line x1="252.15" y1="684.9" x2="252.15" y2="715" stroke="#c41c1c" stroke-width="1.6" /><line x1="260.4" y1="694.5" x2="260.4" y2="715" stroke="#c41c1c" stroke-width="1.6" /><line x1="268.65" y1="663.5" x2="268.65" y2="715" stroke="#c41c1c" stroke-width="1.6" /><line x1="276.9" y1="657.3" x2="276.9" y2="715" stroke="#c41c1c" stroke-width="1.6" /><line x1="285.15" y1="671.9" x2="285.15" y2="715" stroke="#c41c1c" stroke-width="1.6" /><line x1="293.4" y1="657.3" x2="293.4" y2="715" stroke="#c41c1c" stroke-width="1.6" /><line x1="301.65" y1="660.1" x2="301.65" y2="715" stroke="#c41c1c" stroke-width="1.6" /><line x1="309.9" y1="671" x2="309.9" y2="715" stroke="#c41c1c" stroke-width="1.6" /><line x1="318.15" y1="693.6" x2="318.15" y2="715" stroke="#c41c1c" stroke-width="1.6" /><line x1="326.4" y1="682.1" x2="326.4" y2="715" stroke="#c41c1c" stroke-width="1.6" /><line x1="334.65" y1="695.8" x2="334.65" y2="715" stroke="#c41c1c" stroke-width="1.6" /><line x1="342.9" y1="688.3" x2="342.9" y2="715" stroke="#c41c1c" stroke-width="1.6" /><line x1="351.15" y1="687.4" x2="351.15" y2="715" stroke="#c41c1c" stroke-width="1.6" /><line x1="359.4" y1="668.8" x2="359.4" y2="715" stroke="#c41c1c" stroke-width="1.6" /><line x1="367.65" y1="661" x2="367.65" y2="715" stroke="#c41c1c" stroke-width="1.6" /><line x1="375.9" y1="669.7" x2="375.9" y2="715" stroke="#c41c1c" stroke-width="1.6" /><line x1="384.15" y1="675.9" x2="384.15" y2="715" stroke="#c41c1c" stroke-width="1.6" /><line x1="392.4" y1="689.9" x2="392.4" y2="715" stroke="#c41c1c" stroke-width="1.6" /><line x1="400.65" y1="693.6" x2="400.65" y2="715" stroke="#c41c1c" stroke-width="1.6" /><line x1="408.9" y1="688.3" x2="408.9" y2="715" stroke="#c41c1c" stroke-width="1.6" /><line x1="417.15" y1="681.2" x2="417.15" y2="715" stroke="#c41c1c" stroke-width="1.6" /><line x1="425.4" y1="687.4" x2="425.4" y2="715" stroke="#c41c1c" stroke-width="1.6" /><line x1="433.65" y1="691.1" x2="433.65" y2="715" stroke="#c41c1c" stroke-width="1.6" /><line x1="441.9" y1="684.9" x2="441.9" y2="715" stroke="#c41c1c" stroke-width="1.6" /><line x1="450.15" y1="697.3" x2="450.15" y2="715" stroke="#c41c1c" stroke-width="1.6" /><line x1="458.4" y1="688.9" x2="458.4" y2="715" stroke="#c41c1c" stroke-width="1.6" /><line x1="466.65" y1="691.1" x2="466.65" y2="715" stroke="#c41c1c" stroke-width="1.6" /><line x1="474.9" y1="688.3" x2="474.9" y2="715" stroke="#c41c1c" stroke-width="1.6" /><line x1="483.15" y1="689.9" x2="483.15" y2="715" stroke="#c41c1c" stroke-width="1.6" /><line x1="491.4" y1="683.5" x2="491.4" y2="715" stroke="#c41c1c" stroke-width="1.6" /><line x1="499.65" y1="681.2" x2="499.65" y2="715" stroke="#c41c1c" stroke-width="1.6" /><line x1="507.9" y1="673.6" x2="507.9" y2="715" stroke="#c41c1c" stroke-width="1.6" /><line x1="516.15" y1="682.5" x2="516.15" y2="715" stroke="#c41c1c" stroke-width="1.6" /><line x1="524.4" y1="672.2" x2="524.4" y2="715" stroke="#c41c1c" stroke-width="1.6" /><line x1="532.65" y1="681.2" x2="532.65" y2="715" stroke="#c41c1c" stroke-width="1.6" /><line x1="540.9" y1="684.8" x2="540.9" y2="715" stroke="#c41c1c" stroke-width="1.6" /><line x1="549.15" y1="688.4" x2="549.15" y2="715" stroke="#c41c1c" stroke-width="1.6" /><line x1="557.4" y1="669.9" x2="557.4" y2="715" stroke="#c41c1c" stroke-width="1.6" /><line x1="565.65" y1="645.3" x2="565.65" y2="715" stroke="#c41c1c" stroke-width="1.6" /><line x1="573.9" y1="638.6" x2="573.9" y2="715" stroke="#c41c1c" stroke-width="1.6" /><line x1="582.15" y1="645.3" x2="582.15" y2="715" stroke="#c41c1c" stroke-width="1.6" /><line x1="10" y1="715.2" x2="716" y2="715.2" stroke="#117a11" stroke-width="1.3" /><line x1="590.6" y1="635.3" x2="590.6" y2="718.9" stroke="#a028b0" stroke-width="1.4" /><line x1="718" y1="637.5" x2="718" y2="718.9" stroke="#28c4c8" stroke-width="1.6" /><line x1="707" y1="646.5" x2="718" y2="646.5" stroke="#28c4c8" stroke-width="1.5" /><text x="721.5" y="650.7" font-family="Liberation Sans" font-size="12.4" fill="#28c4c8" stroke="#28c4c8" stroke-width="0.22" text-anchor="start" textLength="50" lengthAdjust="spacingAndGlyphs" >150. Mr</text><line x1="713" y1="658.0" x2="718" y2="658.0" stroke="#28c4c8" stroke-width="1.5" /><line x1="707" y1="669.5" x2="718" y2="669.5" stroke="#28c4c8" stroke-width="1.5" /><text x="721.5" y="673.7" font-family="Liberation Sans" font-size="12.4" fill="#28c4c8" stroke="#28c4c8" stroke-width="0.22" text-anchor="start" textLength="50" lengthAdjust="spacingAndGlyphs" >100. Mr</text><line x1="713" y1="681.0" x2="718" y2="681.0" stroke="#28c4c8" stroke-width="1.5" /><line x1="707" y1="692.5" x2="718" y2="692.5" stroke="#28c4c8" stroke-width="1.5" /><text x="721.5" y="696.7" font-family="Liberation Sans" font-size="12.4" fill="#28c4c8" stroke="#28c4c8" stroke-width="0.22" text-anchor="start" textLength="42.5" lengthAdjust="spacingAndGlyphs" >50. Mr</text><line x1="713" y1="704.0" x2="718" y2="704.0" stroke="#28c4c8" stroke-width="1.5" /><text x="721.5" y="722" font-family="Liberation Sans" font-size="12.4" fill="#28c4c8" stroke="#28c4c8" stroke-width="0.22" text-anchor="start" clip-path="url(#cpV)">0</text><defs><clipPath id="cpV"><rect x="700" y="636" width="90" height="82.5"/></clipPath></defs><rect x="10" y="639" width="51" height="14" fill="#000" /><rect x="10" y="653" width="197.5" height="14" fill="#000" /><text x="13" y="649.8" font-family="Liberation Sans" font-size="12.4" fill="#d8d820" stroke="#d8d820" stroke-width="0.22" text-anchor="start" textLength="47" lengthAdjust="spacingAndGlyphs" >Volume</text><text x="12.4" y="663.8" font-family="Liberation Sans" font-size="12.4" fill="#d81c1c" stroke="#d81c1c" stroke-width="0.22" text-anchor="start" textLength="27.6" lengthAdjust="spacingAndGlyphs" >VOL</text><text x="87" y="663.8" font-family="Liberation Sans" font-size="12.4" fill="#d81c1c" stroke="#d81c1c" stroke-width="0.22" text-anchor="start" textLength="119.5" lengthAdjust="spacingAndGlyphs" >:133,566,400,000</text><line x1="12.9" y1="723.3" x2="12.9" y2="745.5" stroke="#c8c8c8" stroke-width="1.3" /><text x="15.2" y="742.7" font-family="Liberation Sans" font-size="12" fill="#28c4c8" text-anchor="start" textLength="16" lengthAdjust="spacingAndGlyphs" >20</text><line x1="111.9" y1="723.3" x2="111.9" y2="745.5" stroke="#c8c8c8" stroke-width="1.3" /><text x="114.2" y="742.7" font-family="Liberation Sans" font-size="12" fill="#28c4c8" text-anchor="start" textLength="16" lengthAdjust="spacingAndGlyphs" >21</text><line x1="210.9" y1="723.3" x2="210.9" y2="745.5" stroke="#c8c8c8" stroke-width="1.3" /><text x="213.20000000000002" y="742.7" font-family="Liberation Sans" font-size="12" fill="#28c4c8" text-anchor="start" textLength="16" lengthAdjust="spacingAndGlyphs" >22</text><line x1="309.9" y1="723.3" x2="309.9" y2="745.5" stroke="#c8c8c8" stroke-width="1.3" /><text x="312.2" y="742.7" font-family="Liberation Sans" font-size="12" fill="#28c4c8" text-anchor="start" textLength="16" lengthAdjust="spacingAndGlyphs" >23</text><line x1="408.9" y1="723.3" x2="408.9" y2="745.5" stroke="#c8c8c8" stroke-width="1.3" /><text x="411.2" y="742.7" font-family="Liberation Sans" font-size="12" fill="#28c4c8" text-anchor="start" textLength="16" lengthAdjust="spacingAndGlyphs" >24</text><line x1="507.9" y1="723.3" x2="507.9" y2="745.5" stroke="#c8c8c8" stroke-width="1.3" /><text x="510.2" y="742.7" font-family="Liberation Sans" font-size="12" fill="#28c4c8" text-anchor="start" textLength="16" lengthAdjust="spacingAndGlyphs" >25</text><rect x="464.65" y="722.5" width="4.2" height="7.2" fill="#18e0f0" /><rect x="472.9" y="722.5" width="4.2" height="7.2" fill="#18e0f0" /><rect x="481.15" y="722.5" width="4.2" height="7.2" fill="#18e0f0" /><rect x="489.4" y="722.5" width="4.2" height="7.2" fill="#18e0f0" /><rect x="497.65" y="722.5" width="4.2" height="7.2" fill="#18e0f0" /><rect x="505.9" y="722.5" width="4.2" height="7.2" fill="#7ab0b0" /><rect x="514.15" y="722.5" width="4.2" height="7.2" fill="#18e0f0" /><rect x="522.4" y="722.5" width="4.2" height="7.2" fill="#18e0f0" /><rect x="530.65" y="722.5" width="4.2" height="7.2" fill="#18e0f0" /><rect x="538.9" y="722.5" width="4.2" height="7.2" fill="#18e0f0" /><rect x="547.15" y="722.5" width="4.2" height="7.2" fill="#18e0f0" /><rect x="555.4" y="722.5" width="4.2" height="7.2" fill="#18e0f0" /><rect x="563.65" y="722.5" width="4.2" height="7.2" fill="#18e0f0" /><rect x="571.9" y="722.5" width="4.2" height="7.2" fill="#18e0f0" /><rect x="580.15" y="722.5" width="4.2" height="7.2" fill="#18e0f0" /><rect x="588.4" y="722.5" width="4.2" height="7.2" fill="#18e0f0" /><rect x="6" y="745.9" width="711" height="10.8" fill="#f6f6f6" /><rect x="6" y="745.9" width="21" height="10.8" fill="#e8e8e8" /><rect x="26" y="745.9" width="1.2" height="11.2" fill="#a0a0a0" /><rect x="6" y="756.2" width="21" height="1" fill="#a0a0a0" /><path d="M14.5 751.3 L17.5 748.8 L17.5 753.8 Z" fill="#101010"/><rect x="674.5" y="745.9" width="21" height="10.8" fill="#dadada" /><rect x="674.5" y="756.2" width="21" height="1" fill="#a0a0a0" /><rect x="695.9" y="745.9" width="20.6" height="10.8" fill="#ececec" /><rect x="715.5" y="745.9" width="1.2" height="11" fill="#a0a0a0" /><rect x="695.9" y="756.2" width="20.6" height="1" fill="#a0a0a0" /><path d="M708 751.3 L705 748.8 L705 753.8 Z" fill="#101010"/><rect x="717" y="745" width="81.6" height="12" fill="#000000" /><rect x="6" y="756.7" width="792.6" height="1.8" fill="#eeeeee" /><rect x="0" y="758.5" width="806" height="7" fill="#c0c0c0" /><rect x="0" y="763" width="806" height="2.5" fill="#b0b0b0" /><rect x="0" y="765.5" width="806" height="2.5" fill="#cfcfcf" /><rect x="471" y="766" width="27" height="2" fill="#3a3a3a" /><rect x="88" y="765.5" width="1" height="2.5" fill="#8a8a8a" /><rect x="140" y="765.5" width="1" height="2.5" fill="#8a8a8a" /><rect x="315" y="765.5" width="1" height="2.5" fill="#8a8a8a" /><rect x="530" y="765.5" width="1" height="2.5" fill="#8a8a8a" /><rect x="640" y="765.5" width="1" height="2.5" fill="#8a8a8a" /><rect x="700" y="765.5" width="1" height="2.5" fill="#8a8a8a" /><rect x="743.7" y="732.6" width="25" height="24.1" fill="#dcdcdc" /><rect x="743.7" y="732.6" width="25" height="1" fill="#f4f4f4" /><path d="M749.6 747.5 C749.2 742.5 752 739 757.8 738.6" fill="none" stroke="#2a62b0" stroke-width="3.6"/><path d="M746 744.2 L753.4 744.6 L749.2 750 Z" fill="#2a62b0"/><path d="M754.6 751.6 C760.2 751.4 763.4 748.2 763.2 743" fill="none" stroke="#2a62b0" stroke-width="3.6"/><path d="M759.4 743.6 L766.8 743.4 L763.2 738.6 Z" fill="#2a62b0"/><rect x="769.6" y="743" width="15.4" height="13.7" fill="#dcdcdc" /><rect x="785" y="743" width="12.6" height="13.7" fill="#dcdcdc" /><rect x="784.5" y="743" width="1" height="13.7" fill="#a8a8a8" /><path d="M772.5 749.8 L780.5 745.2 L780.5 754.4 Z" fill="#0a14d0" stroke="#000050" stroke-width="0.6"/><path d="M795 749.8 L787 745.2 L787 754.4 Z" fill="#0a14d0" stroke="#000050" stroke-width="0.6"/></svg></body></html>
